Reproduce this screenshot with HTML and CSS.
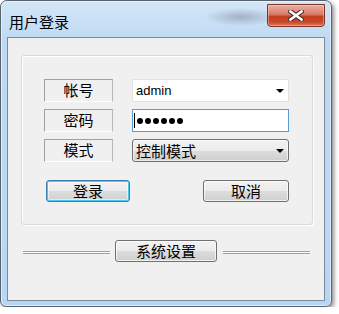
FILE: index.html
```html
<!DOCTYPE html>
<html lang="zh-CN">
<head>
    <meta charset="UTF-8">
    <meta name="viewport" content="width=device-width, initial-scale=1.0">
    <title>用户登录</title>
    <link rel="stylesheet" href="styles.css">
</head>
<body>
    <div class="window">
        <!-- 标题栏 -->
        <div class="titlebar">
            <span class="title">用户登录</span>
            <div class="close">
                <svg width="16" height="11" viewBox="0 0 16 11">
                    <path d="M2.5 1.5 L13.5 9.5 M13.5 1.5 L2.5 9.5" stroke="#4a2a24" stroke-width="4.6" stroke-linecap="square" fill="none"/>
                    <path d="M2.5 1.5 L13.5 9.5 M13.5 1.5 L2.5 9.5" stroke="#ffffff" stroke-width="2.6" stroke-linecap="square" fill="none"/>
                </svg>
            </div>
        </div>

        <div class="client">
            <div class="group">
                <div class="form">
                    <div class="label">帐号</div>
                    <div class="combo">
                        <span class="combo-text">admin</span>
                        <i class="arrow"></i>
                    </div>

                    <div class="label">密码</div>
                    <div class="pwd">
                        <span class="caret"></span>
                        <span class="dot"></span><span class="dot"></span><span class="dot"></span>
                        <span class="dot"></span><span class="dot"></span><span class="dot"></span>
                    </div>

                    <div class="label">模式</div>
                    <div class="select">
                        <span>控制模式</span>
                        <i class="arrow"></i>
                    </div>
                </div>

                <div class="actions">
                    <button class="btn btn-login">登录</button>
                    <button class="btn btn-cancel">取消</button>
                </div>
            </div>

            <!-- 系统设置 -->
            <div class="sep">
                <div class="line"></div>
                <button class="btn btn-sys">系统设置</button>
                <div class="line"></div>
            </div>
        </div>
    </div>
</body>
</html>
```

FILE: styles.css
```css
* {
    margin: 0;
    padding: 0;
    box-sizing: border-box;
}

body {
    background: #ffffff;
    font-family: "Noto Sans CJK SC", "Liberation Sans", sans-serif;
    color: #000;
}

/* 窗口外框 */
.window {
    width: 332px;
    height: 307px;
    border: 1px solid #56626e;
    border-radius: 7px 7px 6px 6px;
    padding: 0 6px 5px 6px;
    background: linear-gradient(#d3e6f8, #bfd9f3 40px, #b8d6f3);
    box-shadow: 2px 2px 4px rgba(0, 0, 0, .45), inset 0 0 0 1px rgba(255, 255, 255, .55);
}

.titlebar {
    height: 36px;
    display: flex;
    justify-content: space-between;
    align-items: flex-start;
    background: radial-gradient(ellipse 36px 9px at 234px 16px, rgba(120, 130, 145, .5), rgba(120, 130, 145, 0));
}

.title {
    font-size: 15px;
    line-height: 18px;
    margin-top: 12px;
    padding-left: 2px;
}

/* 关闭按钮 */
.close {
    width: 58px;
    height: 23px;
    margin-top: 3px;
    border: 1px solid #7e3326;
    border-radius: 0 0 4px 4px;
    background: linear-gradient(#eab2a4, #d97a64 45%, #c2401f 55%, #c9472a 80%, #e07858);
    box-shadow: inset 0 0 0 1px rgba(255, 210, 200, .45);
    display: flex;
    justify-content: center;
    align-items: center;
}

/* 客户区 */
.client {
    height: 264px;
    border: 1px solid #7d8b99;
    background: #f0f0f0;
    padding: 17px 0 0 13px;
}

.group {
    width: 292px;
    height: 170px;
    border: 1px solid #dadada;
    border-radius: 3px;
    box-shadow: inset 1px 1px 0 #fff, 1px 1px 0 #fff;
    padding: 23px 0 0 22px;
}

.form {
    display: grid;
    grid-template-columns: 69px 157px;
    grid-auto-rows: 23px;
    column-gap: 19px;
    row-gap: 7px;
}

.label {
    border: 1px solid #a0a0a0;
    border-right-color: #b8b8b8;
    border-bottom-color: #ffffff;
    font-size: 15px;
    line-height: 20px;
    text-align: center;
}

.combo {
    background: #fff;
    border: 1px solid #e2e2e2;
    display: flex;
    align-items: center;
    justify-content: space-between;
    padding: 0 4px 0 3px;
}

.combo-text {
    font-family: "Liberation Sans", sans-serif;
    font-size: 13px;
}

.arrow {
    width: 0;
    height: 0;
    border-left: 4px solid transparent;
    border-right: 4px solid transparent;
    border-top: 4px solid #000;
}

.pwd {
    background: #fff;
    border: 1px solid #5b9bd5;
    display: flex;
    align-items: center;
    gap: 2px;
    padding-left: 1px;
}

.caret {
    width: 1px;
    height: 15px;
    background: #000;
}

.dot {
    width: 6px;
    height: 6px;
    border-radius: 50%;
    background: #000;
}

.select {
    border: 1px solid #707070;
    border-radius: 3px;
    background: linear-gradient(#f2f2f2, #ebebeb 50%, #dddddd 50%, #cfcfcf);
    box-shadow: inset 0 0 0 1px rgba(255, 255, 255, .6);
    display: flex;
    align-items: center;
    justify-content: space-between;
    padding: 0 4px 0 3px;
    font-size: 15px;
}

/* 按钮 */
.actions {
    margin: 18px 0 0 2px;
    width: 243px;
    display: flex;
    justify-content: space-between;
}

.btn {
    height: 22px;
    border: 1px solid #707070;
    border-radius: 3px;
    background: linear-gradient(#f2f2f2, #ebebeb 50%, #dddddd 50%, #cfcfcf);
    box-shadow: inset 0 0 0 1px rgba(255, 255, 255, .7);
    font-family: "Noto Sans CJK SC", sans-serif;
    font-size: 15px;
    line-height: 18px;
    color: #000;
}

.btn-login {
    width: 84px;
    border-color: #3c7fb1;
    box-shadow: inset 0 0 0 1px #48c6f4, inset 0 0 0 2px rgba(255, 255, 255, .5);
}

.btn-cancel {
    width: 86px;
}

.sep {
    margin: 15px 0 0 2px;
    display: flex;
    align-items: center;
}

.line {
    width: 87px;
    height: 3px;
    margin-top: 2px;
    border-top: 1px solid #a0a0a0;
    border-bottom: 1px solid #a0a0a0;
    background: #fff;
}

.btn-sys {
    width: 102px;
    margin: 0 6px 0 5px;
}
```
